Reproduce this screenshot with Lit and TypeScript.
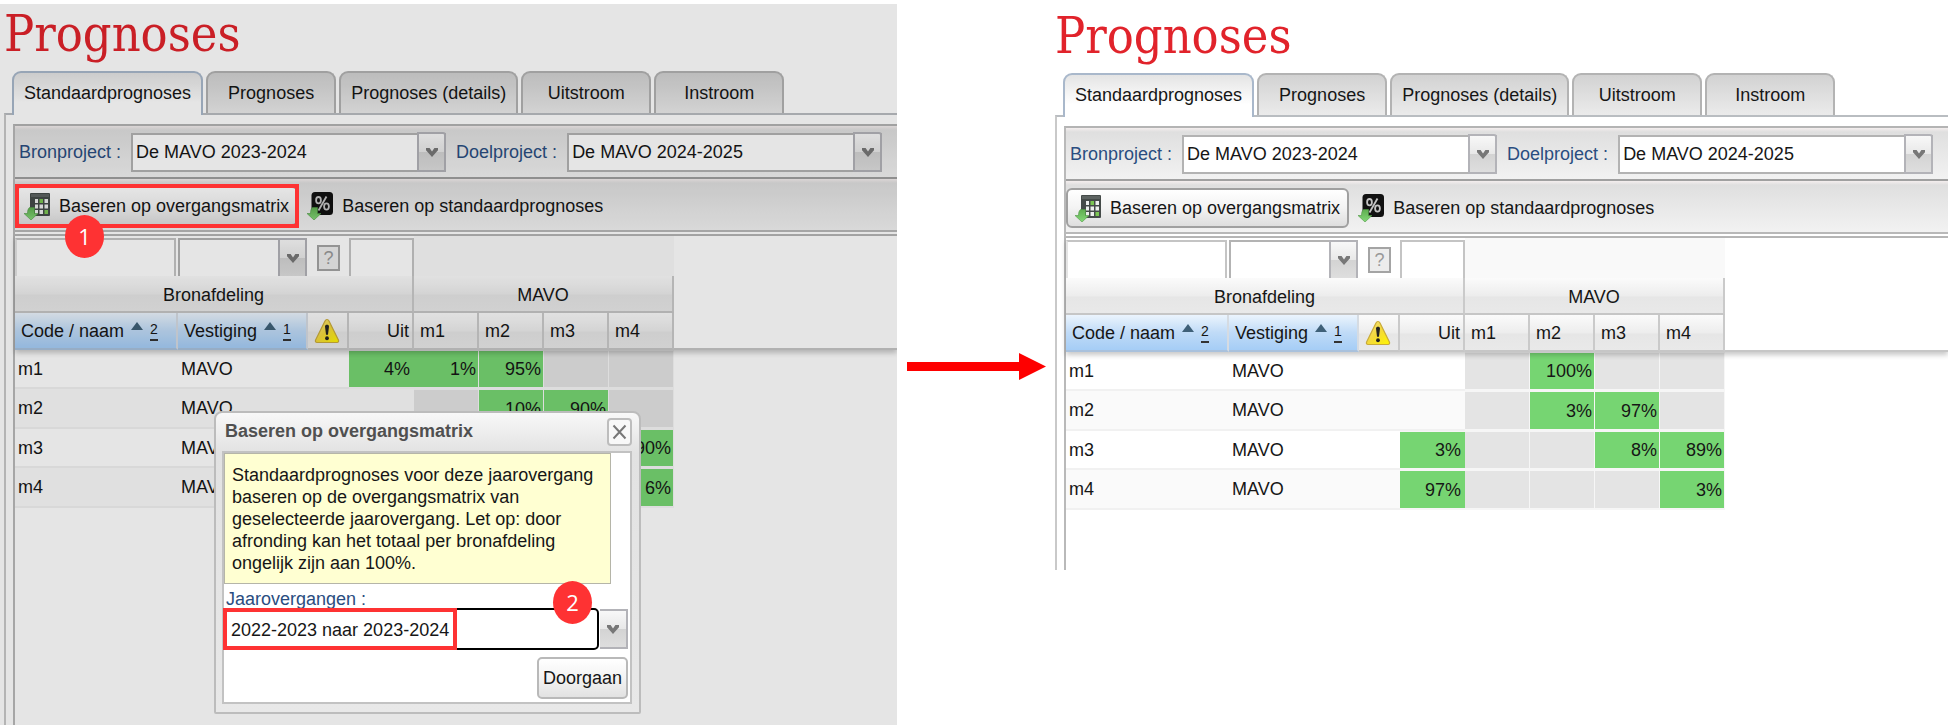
import { LitElement, html, svg, css, nothing } from "lit";
import { customElement, property } from "lit/decorators.js";

interface Row {
  code: string;
  location: string;
  values: (string | null)[];
}

const before: Row[] = [
  { code: "m1", location: "MAVO", values: ["4%", "1%", "95%", null, null] },
  { code: "m2", location: "MAVO", values: [null, null, "10%", "90%", null] },
  { code: "m3", location: "MAVO", values: [null, null, null, null, "90%"] },
  { code: "m4", location: "MAVO", values: [null, null, null, null, "6%"] },
];

const after: Row[] = [
  { code: "m1", location: "MAVO", values: [null, null, "100%", null, null] },
  { code: "m2", location: "MAVO", values: [null, null, "3%", "97%", null] },
  { code: "m3", location: "MAVO", values: ["3%", null, null, "8%", "89%"] },
  { code: "m4", location: "MAVO", values: ["97%", null, null, null, "3%"] },
];

const tabs = ["Standaardprognoses", "Prognoses", "Prognoses (details)", "Uitstroom", "Instroom"];

const chevron = html`<svg width="14" height="12" viewBox="0 0 14 12" aria-hidden="true">
  <path d="M1 2h3.6L7 5.4 9.4 2H13v2.2L7 11 1 4.2z" fill="#777" />
</svg>`;

const greenArrow = svg`<path d="M5.5 15.5h5v6H14L7 28l-7-6.500h3.500c0-3 .5-4.600 2-6z" fill="url(#ga)" stroke="#4f9a45" stroke-width=".6" />`;

const matrixIcon = html`<svg width="26" height="28" viewBox="0 0 26 28" aria-hidden="true">
  <defs><linearGradient id="ga" x1="0" y1="0" x2="0" y2="1"><stop offset="0" stop-color="#5fae50" /><stop offset="1" stop-color="#84d878" /></linearGradient></defs>
  <rect x="6" y="1" width="20" height="23" rx="1" fill="#454b49" />
  <rect x="7" y="2" width="18" height="3" fill="#5d6361" />
  <g fill="#eef0ee">
    <rect x="11" y="7" width="3" height="4" /><rect x="15.500" y="7" width="3.500" height="4" fill="#7cc653" /><rect x="20.500" y="7" width="3.500" height="4" />
    <rect x="11" y="12.500" width="3" height="4" /><rect x="15.500" y="12.500" width="3.500" height="4" /><rect x="20.500" y="12.500" width="3.500" height="4" />
    <rect x="11" y="18" width="3" height="4" /><rect x="15.500" y="18" width="3.500" height="4" /><rect x="20.500" y="18" width="3.500" height="4" fill="#7cc653" />
  </g>
  ${greenArrow}
</svg>`;

const percentIcon = html`<svg width="26" height="28" viewBox="0 0 26 28" aria-hidden="true">
  <defs><linearGradient id="ga" x1="0" y1="0" x2="0" y2="1"><stop offset="0" stop-color="#5fae50" /><stop offset="1" stop-color="#84d878" /></linearGradient></defs>
  <rect x="4.500" y="0" width="21.500" height="23" rx="3.500" fill="#111" />
  <g fill="none" stroke="#c4c4c4" stroke-width="1.800">
    <ellipse cx="11.500" cy="8.200" rx="2.400" ry="3.200" /><ellipse cx="19.500" cy="14.500" rx="2.400" ry="3.200" />
    <path d="M19.500 4.500 11.500 18.500" />
  </g>
  ${greenArrow}
</svg>`;

const warningIcon = html`<svg width="26" height="26" viewBox="0 0 26 26" role="img" aria-label="Waarschuwing">
  <defs><linearGradient id="wg" x1="0" y1="0" x2="1" y2="1"><stop offset="0" stop-color="#f4e08a" /><stop offset=".5" stop-color="#f3d93a" /><stop offset="1" stop-color="#fff600" /></linearGradient></defs>
  <path d="M13 1.500c1 0 1.600.6 2 1.400l9.400 19c.6 1.400 0 2.600-1.500 2.600H3.100c-1.500 0-2.100-1.200-1.500-2.600l9.400-19c.4-.8 1-1.400 2-1.400z" fill="url(#wg)" stroke="#c9ab3a" stroke-width="1.200" />
  <path d="M11 8.500c0-1.200.8-1.800 2-1.800s2 .6 2 1.800l-1 8.200h-2z" fill="#222" />
  <ellipse cx="13" cy="20.300" rx="1.900" ry="2" fill="#222" />
</svg>`;

const sortIcon = html`<svg width="12" height="8" viewBox="0 0 12 8" aria-hidden="true"><path d="M6 0l6 8H0z" fill="#3f6078" /></svg>`;

@customElement("prognoses-screen")
class PrognosesScreen extends LitElement {
  @property({ attribute: false }) rows: Row[] = [];
  @property({ type: Boolean, reflect: true }) modal = false;

  static styles = css`
    :host {
      display: flex;
      flex-direction: column;
      position: relative;
      min-width: 0;
      overflow: hidden;
      background: #fff;
      color: #161616;
      font-family: "Liberation Sans", Arial, sans-serif;
      font-size: 18px;
      line-height: 22px;
    }
    * { box-sizing: border-box; }
    button, select, input { font: inherit; color: inherit; margin: 0; }
    svg { display: block; flex: none; }
    .mask {
      position: absolute;
      inset: 0;
      z-index: 1;
      background: rgba(0, 0, 0, 0.1);
    }
    h1 {
      margin: 0;
      height: 67px;
      padding-left: 4px;
      font: 400 50px/61px "DejaVu Serif Condensed", "DejaVu Serif", serif;
      color: #e1232b;
    }
    .tabs { display: flex; gap: 3px; padding-left: 12px; }
    .tab {
      min-width: 130px;
      height: 42px;
      padding: 0 10px;
      border: 2px solid #b3b3b3;
      border-bottom: 0;
      border-radius: 9px 9px 0 0;
      background: linear-gradient(#d2d2d2, #ebebeb);
      white-space: nowrap;
    }
    .tab.active {
      position: relative;
      height: 44px;
      margin-bottom: -2px;
      padding-bottom: 2px;
      border-color: #a9b8cb;
      background: linear-gradient(#e4e4e4, #fff 70%);
    }
    .panel {
      flex: 1;
      display: flex;
      margin-left: 4px;
      padding: 9px 0 0 7px;
      border-top: 2px solid #b9bdc1;
      border-left: 2px solid #c9c9c9;
    }
    .content {
      flex: 1;
      min-width: 0;
      border-left: 2px solid #b9b9b9;
      border-top: 2px solid #b4b4b4;
      padding-bottom: 60px;
    }
    .bar {
      display: flex;
      align-items: center;
      height: 51px;
      background: linear-gradient(#f4eeee 0, #dfdfdf 4px, #f2f2f2);
    }
    .projects { gap: 10px; padding: 0 4px; }
    .actions {
      height: 55px;
      padding-top: 3px;
      border-top: 2px solid #a0a0a0;
      border-bottom: 2px solid #b8b8b8;
    }
    .projects label, .field-label { color: #2a4d80; white-space: nowrap; }
    .combo { display: grid; grid-template-columns: minmax(0, 1fr) 29px; width: 315px; height: 40px; }
    .combo select {
      grid-area: 1 / 1 / 2 / 3;
      align-self: end;
      width: 100%;
      height: 39px;
      appearance: none;
      border: 2px solid #b3b3b3;
      border-radius: 0;
      padding: 0 3px;
      background: #fff;
    }
    .trigger {
      grid-area: 1 / 2;
      display: flex;
      align-items: center;
      justify-content: center;
      border: 2px solid #b3b3b8;
      border-radius: 0 3px 0 0;
      background: linear-gradient(#f8f8f8, #e8e8e8 50%, #d3d3d3 50%, #dedede);
      pointer-events: none;
    }
    .action-wrap { position: relative; }
    .action {
      display: flex;
      align-items: center;
      gap: 9px;
      height: 40px;
      padding: 0 7px;
      border: 2px solid transparent;
      border-radius: 6px;
      background: none;
      white-space: nowrap;
    }
    .action.raised {
      border-color: #a0a0a0;
      background: linear-gradient(#fff, #f3f3f3 50%, #dedede);
    }
    .mark {
      position: absolute;
      z-index: 2;
      border: 4px solid #fe3233;
      pointer-events: none;
    }
    .action-wrap .mark { inset: -2px -1px -2px 0; }
    .badge {
      position: absolute;
      z-index: 3;
      width: 39px;
      height: 43px;
      border-radius: 50%;
      background: #fe3233;
      color: #fff;
      font: 500 22px/43px "Open Sans", sans-serif;
      text-align: center;
    }
    .action-wrap .badge { left: 50px; top: 29px; }

    table {
      width: 100%;
      margin-top: 2px;
      border-top: 2px solid #b8b8b8;
      border-spacing: 0;
      table-layout: fixed;
    }
    .c-code { width: 163px; }
    .c-loc { width: 130px; }
    .c-warn { width: 41px; }
    .c-val { width: 65px; }
    th, td { padding: 0; font-weight: 400; text-align: left; }
    thead { position: relative; box-shadow: 0 3px 5px rgba(0, 0, 0, 0.22); }
    .filters { height: 40px; }
    .filters td { padding-top: 2px; background: #fff; vertical-align: top; }
    .filters .empty { background: #f9f9f9; }
    .filters input {
      display: block;
      width: 100%;
      height: 38px;
      border: 2px solid #c4c4c4;
      border-bottom: 0;
      border-radius: 0;
      background: #fff;
    }
    .filters .first input { width: 161px; border-left-color: #e4e4e4; }
    .filters .combo { width: 129px; height: 38px; }
    .filters .combo select, .filters .trigger { height: 38px; border-bottom: 0; }
    .help {
      display: block;
      width: 23px;
      height: 26px;
      margin: 7px auto 0;
      padding: 0;
      border: 2px solid #a4a4a4;
      background: #ececec;
      color: #999;
      line-height: 22px;
    }
    .groups { height: 37px; }
    .groups th, .columns th {
      border-bottom: 2px solid #c6c6c6;
      border-right: 2px solid #cacaca;
      background: linear-gradient(#fbfbfb, #ededed 50%, #e6e6e6 55%, #e9e9e9);
      white-space: nowrap;
    }
    .groups th { text-align: center; padding-top: 2px; }
    .columns { height: 37px; }
    .columns th { padding: 1px 6px 0; }
    .columns .sorted {
      border-right-color: #d5dbe2;
      border-bottom-color: #a9c1dc;
      background: linear-gradient(#ebf4fd, #c0dbf7 50%, #a5cdf6);
    }
    .columns .num { padding-right: 3px; text-align: right; }
    .groups .fill, .columns .fill { border-right: 0; background: #fff; }
    .groups .fill { border-bottom: 0; }
    .head { display: flex; align-items: center; gap: 7px; height: 34px; }
    .head svg { margin-bottom: 10px; }
    .order {
      display: block;
      margin-bottom: 1px;
      padding-bottom: 2px;
      border-bottom: 2px solid #333;
      font-size: 14px;
      line-height: 16px;
    }
    tbody tr { height: 39px; }
    tbody tr:nth-child(even) { height: 40px; }
    tbody td { border-bottom: 2px solid #f1f1f1; background: #fff; }
    tbody tr:nth-child(even) td { background: #fafafa; }
    tbody td.text { padding-left: 3px; }
    tbody td.val {
      padding-right: 2px;
      border-right: 1px solid #f6f6f6;
      border-top: 1px solid #f6f6f6;
      border-bottom-color: #f6f6f6;
      text-align: right;
    }
    tbody td.uit { border-right: 0; padding-right: 4px; }
    tbody tr td.blocked { background: #e4e4e4; }
    tbody tr td.filled { background: #76d572; }
    tbody tr td.fill { border: 0; background: #fff; }

    .dialog {
      position: absolute;
      z-index: 2;
      left: 214px;
      top: 407px;
      width: 427px;
      margin: 0;
      padding: 0 7px 8px 6px;
      border: 2px solid #bcbcbc;
      border-radius: 8px 8px 2px 2px;
      background: linear-gradient(#f8f8f8, #e2e2e2 40px, #e8e8e8);
    }
    .dialog header {
      display: flex;
      align-items: center;
      justify-content: space-between;
      height: 38px;
      padding-left: 3px;
    }
    .dialog h2 { margin: 0; font-size: 18px; font-weight: 700; line-height: 24px; padding-bottom: 2px; color: #505050; }
    .close {
      display: flex;
      align-items: center;
      justify-content: center;
      width: 25px;
      height: 28px;
      padding: 0;
      border: 2px solid #bdbdbd;
      border-radius: 4px;
      background: #f8f8f8;
    }
    .dialog-body {
      padding: 0 2px 3px 0;
      border: 2px solid #c2c2c2;
      background: #fff;
    }
    .hint {
      margin: 0 17px 0 0;
      padding: 10px 7px 9px;
      border: 1px solid #b5b5a8;
      background: #ffffd2;
    }
    .field-label { display: block; height: 24px; padding: 4px 2px 0; overflow: hidden; }
    .field { position: relative; display: flex; gap: 1px; }
    .field select {
      flex: 1;
      min-width: 0;
      height: 42px;
      appearance: none;
      padding: 1px 5px 0;
      border: 2px solid #000;
      border-radius: 5px;
      background: #fff;
    }
    .field .trigger { width: 28px; height: 40px; border-radius: 0; margin-top: 1px; border-left: 0; }
    .field .mark { left: -1px; top: 0; width: 234px; height: 42px; }
    .field .badge { right: 36px; top: -27px; }
    .buttons { display: flex; justify-content: flex-end; padding-top: 7px; }
    .proceed {
      height: 42px;
      padding: 0 4px;
      border: 2px solid #b9b9b9;
      border-radius: 5px;
      background: linear-gradient(#fff, #f3f3f3 50%, #e2e2e2);
    }
  `;

  private combo(id: string, value: string) {
    return html`<div class="combo">
      <select id=${id} aria-label=${id}>${value ? html`<option>${value}</option>` : nothing}</select>
      <span class="trigger">${chevron}</span>
    </div>`;
  }

  private row(r: Row) {
    return html`<tr>
      <td class="text">${r.code}</td>
      <td class="text">${r.location}</td>
      <td></td>
      ${r.values.map((v, i) => {
        if (i === 0) return v ? html`<td class="val uit filled">${v}</td>` : html`<td></td>`;
        return html`<td class="val ${v ? "filled" : "blocked"}">${v ?? nothing}</td>`;
      })}
      <td class="fill"></td>
    </tr>`;
  }

  private dialog() {
    return html`<section class="dialog" role="dialog" aria-labelledby="dlg-title">
      <header>
        <h2 id="dlg-title">Baseren op overgangsmatrix</h2>
        <button class="close" aria-label="Sluiten">
          <svg width="15" height="16" viewBox="0 0 15 16" aria-hidden="true"><path d="M1.500 1.500l12 13M13.500 1.500l-12 13" stroke="#777" stroke-width="2" fill="none" /></svg>
        </button>
      </header>
      <div class="dialog-body">
        <p class="hint">Standaardprognoses voor deze jaarovergang baseren op de overgangsmatrix van geselecteerde jaarovergang. Let op: door afronding kan het totaal per bronafdeling ongelijk zijn aan 100%.</p>
        <label class="field-label" for="jaarovergang">Jaarovergangen :</label>
        <div class="field">
          <select id="jaarovergang"><option>2022-2023 naar 2023-2024</option></select>
          <span class="trigger">${chevron}</span>
          <span class="mark"></span>
          <span class="badge">2</span>
        </div>
        <div class="buttons"><button class="proceed">Doorgaan</button></div>
      </div>
    </section>`;
  }

  render() {
    return html`
      <h1>Prognoses</h1>
      <div class="tabs" role="tablist">
        ${tabs.map((t, i) => html`<button class="tab ${i === 0 ? "active" : ""}" role="tab" aria-selected=${i === 0}>${t}</button>`)}
      </div>
      <div class="panel">
        <div class="content">
          <div class="bar projects">
            <label for="bronproject">Bronproject :</label>
            ${this.combo("bronproject", "De MAVO 2023-2024")}
            <label for="doelproject">Doelproject :</label>
            ${this.combo("doelproject", "De MAVO 2024-2025")}
          </div>
          <div class="bar actions">
            <div class="action-wrap">
              <button class="action raised">${matrixIcon}Baseren op overgangsmatrix</button>
              ${this.modal ? html`<span class="mark"></span><span class="badge">1</span>` : nothing}
            </div>
            <button class="action">${percentIcon}Baseren op standaardprognoses</button>
          </div>
          <table>
            <colgroup>
              <col class="c-code" /><col class="c-loc" /><col class="c-warn" />
              <col class="c-val" /><col class="c-val" /><col class="c-val" /><col class="c-val" /><col class="c-val" /><col />
            </colgroup>
            <thead>
              <tr class="filters">
                <td class="first"><input type="text" aria-label="Filter code / naam" /></td>
                <td>${this.combo("vestiging", "")}</td>
                <td><button class="help">?</button></td>
                <td><input type="text" aria-label="Filter uit" /></td>
                <td class="empty" colspan="4"></td>
                <td></td>
              </tr>
              <tr class="groups">
                <th colspan="4" scope="colgroup">Bronafdeling</th>
                <th colspan="4" scope="colgroup">MAVO</th>
                <td class="fill"></td>
              </tr>
              <tr class="columns">
                <th class="sorted" scope="col"><span class="head">Code / naam ${sortIcon}<span class="order">2</span></span></th>
                <th class="sorted" scope="col"><span class="head">Vestiging ${sortIcon}<span class="order">1</span></span></th>
                <th scope="col">${warningIcon}</th>
                <th class="num" scope="col">Uit</th>
                <th scope="col">m1</th>
                <th scope="col">m2</th>
                <th scope="col">m3</th>
                <th scope="col">m4</th>
                <th class="fill"></th>
              </tr>
            </thead>
            <tbody>
              ${this.rows.map((r) => this.row(r))}
            </tbody>
          </table>
        </div>
      </div>
      ${this.modal ? html`<div class="mask"></div>${this.dialog()}` : nothing}
    `;
  }
}

@customElement("app-root")
class AppRoot extends LitElement {
  static styles = css`
    :host {
      display: grid;
      grid-template-columns: minmax(0, 1fr) 154px minmax(0, 1fr);
      align-items: start;
      min-height: 100vh;
      background: #fff;
      overflow: hidden;
    }
    .before { margin-top: 4px; min-height: calc(100vh - 4px); }
    .after { margin-top: 6px; }
    .arrow { display: block; margin: 353px auto 0 10px; }
  `;

  render() {
    return html`
      <prognoses-screen class="before" modal .rows=${before}></prognoses-screen>
      <svg class="arrow" width="140" height="28" viewBox="0 0 140 28" aria-hidden="true">
        <path d="M0 9h112V0l27 13.500L112 27v-9H0z" fill="#fe0000" />
      </svg>
      <prognoses-screen class="after" .rows=${after}></prognoses-screen>
    `;
  }
}
